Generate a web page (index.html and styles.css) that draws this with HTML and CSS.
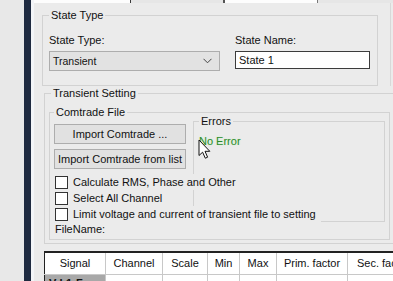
FILE: index.html
```html
<!DOCTYPE html>
<html lang="en">

<head>
    <meta charset="UTF-8">
    <title>State Setting</title>
    <link rel="stylesheet" href="styles.css">
</head>

<body>
    <div class="screen">
        <div class="rail"></div>
        <div class="nav"></div>
        <div class="edge"></div>

        <div class="main">
            <!-- cut-off grid above -->
            <div class="tabstrip">
                <span class="cell cell-white c1"></span>
                <span class="cell c2"></span>
                <span class="cell cell-white c3"></span>
                <span class="cell c4"></span>
            </div>

            <!-- State Type -->
            <div class="state-area">
                <fieldset class="group state-group">
                    <legend>State Type</legend>
                    <div class="state-row">
                        <div class="field field-type">
                            <label class="field-label">State Type:</label>
                            <div class="combo">
                                <span>Transient</span>
                                <svg class="combo-arrow" width="9" height="6" viewBox="0 0 9 6">
                                    <path d="M0.5 0.8 L4.5 4.8 L8.5 0.8" fill="none" stroke="#444" stroke-width="1"/>
                                </svg>
                            </div>
                        </div>
                        <div class="field field-name">
                            <label class="field-label">State Name:</label>
                            <div class="textbox">State 1</div>
                        </div>
                    </div>
                </fieldset>
            </div>

            <!-- Transient Setting -->
            <fieldset class="group transient-group">
                <legend>Transient Setting</legend>
                <fieldset class="group comtrade-group">
                    <legend>Comtrade File</legend>
                    <div class="comtrade-grid">
                        <button class="btn btn-import">Import Comtrade ...</button>
                        <button class="btn btn-list">Import Comtrade from list</button>

                        <fieldset class="group errors-group">
                            <legend>Errors</legend>
                            <div class="error-text">No Error</div>
                        </fieldset>

                        <label class="check check-rms"><span class="box"></span>Calculate RMS, Phase and Other</label>
                        <label class="check check-all"><span class="box"></span>Select All Channel</label>
                        <label class="check check-limit"><span class="box"></span>Limit voltage and current of transient file to setting</label>
                        <div class="filename">FileName:</div>
                    </div>
                </fieldset>
            </fieldset>

            <!-- Channel table -->
            <table class="signals">
                <colgroup>
                    <col style="width: 61px">
                    <col style="width: 57px">
                    <col style="width: 45px">
                    <col style="width: 32px">
                    <col style="width: 37px">
                    <col style="width: 71px">
                    <col style="width: 60px">
                </colgroup>
                <thead>
                    <tr>
                        <th>Signal</th>
                        <th>Channel</th>
                        <th>Scale</th>
                        <th>Min</th>
                        <th>Max</th>
                        <th>Prim. factor</th>
                        <th class="last">Sec. factor</th>
                    </tr>
                </thead>
                <tbody>
                    <tr>
                        <td class="selected">V-L1-F</td>
                        <td></td>
                        <td></td>
                        <td></td>
                        <td></td>
                        <td></td>
                        <td></td>
                    </tr>
                </tbody>
            </table>
        </div>

        <!-- mouse pointer -->
        <svg class="cursor" width="14" height="21" viewBox="0 0 14 21">
            <path d="M1 1 L1 16.5 L4.6 13.2 L7.3 19.2 L9.6 18.2 L7 12.3 L11.8 12.3 Z" fill="#fff" stroke="#111" stroke-width="1" stroke-linejoin="round"/>
        </svg>
    </div>
</body>

</html>
```

FILE: styles.css
```css
* {
    margin: 0;
    padding: 0;
    box-sizing: border-box;
}

body {
    font-family: 'Liberation Sans', Arial, sans-serif;
    font-size: 10.5px;
    color: #111;
    background: #e9e9e9;
    overflow: hidden;
}

.screen {
    display: flex;
    width: 393px;
    height: 281px;
    position: relative;
    overflow: hidden;
}

.rail {
    width: 24px;
    background: #e8e8e8;
}

.nav {
    width: 7px;
    background: #1e2a40;
}

.edge {
    width: 3px;
    background: #f3f5f8;
}

.main {
    flex: 1;
    background: #ebebeb;
    overflow: hidden;
}

/* strip of the grid above */
.tabstrip {
    display: flex;
    height: 3px;
}

.cell {
    height: 3px;
    background: #e6e6e6;
}

.cell-white {
    background: #fdfdfd;
}

.c1 {
    width: 97px;
    border-right: 1px solid #3a3a3a;
}

.c2 {
    width: 94px;
    border-right: 2px solid #555;
}

.c3 {
    width: 93px;
    border-right: 1px solid #777;
}

.c4 {
    flex: 1;
}

/* group boxes */
.group {
    border: 1px solid #d2d2d2;
    min-width: 0;
}

.group legend {
    padding: 0 2px;
    line-height: 14px;
    font-size: 11px;
}

.state-area {
    width: 357px;
    padding: 5px 0 0 8px;
    border-right: 1px solid #d8d8d8;
}

.state-group {
    width: 336px;
    padding: 0 6px 14px;
}

.state-row {
    display: flex;
    gap: 15px;
    padding-top: 11px;
}

.field-label {
    display: block;
    line-height: 14px;
    font-size: 11px;
    margin-bottom: 4px;
}

.field-type {
    width: 171px;
}

.combo {
    height: 20px;
    background: #e2e2e2;
    border: 1px solid #adadad;
    display: flex;
    align-items: center;
    justify-content: space-between;
    padding: 0 7px 0 3px;
}

.textbox {
    width: 135px;
    height: 18px;
    background: #fff;
    border: 1px solid #3c3c3c;
    padding: 0 0 0 3px;
    line-height: 16px;
    font-size: 11px;
}

.transient-group {
    margin: 0 0 0 10px;
    width: 380px;
    padding: 0 0 3px 4px;
}

.transient-group > legend {
    margin-left: 2px;
}

.comtrade-group {
    margin-top: 5px;
    width: 341px;
    padding: 0 3px 2px 4px;
}

.comtrade-grid {
    display: grid;
    grid-template-columns: 132px 192px;
    column-gap: 7px;
    grid-template-rows: 25px 25px 21px 16px 16px 15px;
}

.btn {
    font-family: inherit;
    font-size: 11px;
    color: #111;
    height: 20px;
    background: #e1e1e1;
    border: 1px solid #adadad;
    align-self: end;
    grid-column: 1;
    white-space: nowrap;
}

.btn-import {
    grid-row: 1;
}

.btn-list {
    grid-row: 2;
}

.errors-group {
    grid-column: 2;
    grid-row: 1 / 6;
    margin-top: -5px;
    padding: 0 5px;
    width: 192px;
}

.error-text {
    margin-top: 6px;
    color: #2a8a2a;
    font-size: 11px;
    line-height: 14px;
    text-shadow: 0 0 2px #c8f0c0;
}

.check {
    grid-column: 1 / 3;
    justify-self: start;
    align-self: end;
    display: flex;
    align-items: center;
    height: 16px;
    padding: 0 5px 0 1px;
    background: #ebebeb;
    font-size: 11px;
    white-space: nowrap;
    z-index: 1;
}

.check-rms {
    grid-row: 3;
}

.check-all {
    grid-row: 4;
}

.check-limit {
    grid-row: 5;
}

.box {
    width: 13px;
    height: 13px;
    background: #fff;
    border: 1px solid #333;
    margin-right: 5px;
}

.filename {
    grid-column: 1;
    grid-row: 6;
    padding-left: 1px;
    font-size: 11px;
    line-height: 15px;
}

/* channel table */
.signals {
    margin: 7px 0 0 10px;
    border-collapse: collapse;
    table-layout: fixed;
    width: 363px;
    border-top: 2px solid #222;
    border-left: 1px solid #222;
    background: #fff;
}

.signals th {
    height: 22px;
    font-weight: normal;
    font-size: 11px;
    text-align: center;
    border-right: 1px solid #c8c8c8;
    border-bottom: 1px solid #c8c8c8;
    white-space: nowrap;
    overflow: hidden;
}

.signals th.last {
    text-align: left;
    padding-left: 9px;
}

.signals td {
    height: 20px;
    border-right: 1px solid #c8c8c8;
    vertical-align: top;
    font-size: 11px;
    font-weight: bold;
    padding: 2px 0 0 4px;
}

.signals td.selected {
    background: #a8a8a8;
}

.cursor {
    position: absolute;
    left: 198px;
    top: 139px;
}
```
